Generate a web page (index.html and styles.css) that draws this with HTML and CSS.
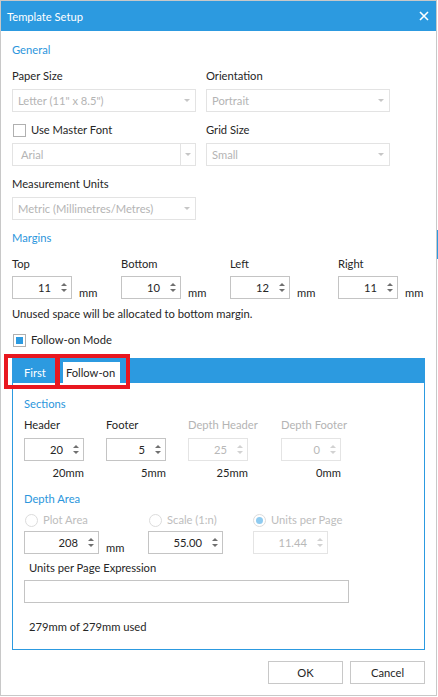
FILE: index.html
```html
<!DOCTYPE html>
<html>
<head>
  <title>Template Setup</title>
  <link rel="stylesheet" href="styles.css">
</head>
<body>
  <div class="window">
    <div class="titlebar">
      <span class="title">Template Setup</span>
      <svg class="close" width="10" height="10" viewBox="0 0 10 10">
        <path d="M1 1L9 9M9 1L1 9" stroke="#fff" stroke-width="1.6" fill="none"/>
      </svg>
    </div>

    <div class="dialog-body">
      <div class="group-title">General</div>
      <div class="general-grid">
        <div class="field">
          <div class="label">Paper Size</div>
          <div class="combo disabled"><span>Letter (11" x 8.5")</span><i class="caret"></i></div>
        </div>
        <div class="field">
          <div class="label">Orientation</div>
          <div class="combo disabled"><span>Portrait</span><i class="caret"></i></div>
        </div>
        <div class="field">
          <div class="check"><span class="box"></span><span>Use Master Font</span></div>
          <div class="combo disabled editable"><span>Arial</span><span class="sep"><i class="caret"></i></span></div>
        </div>
        <div class="field">
          <div class="label">Grid Size</div>
          <div class="combo disabled"><span>Small</span><i class="caret"></i></div>
        </div>
        <div class="field">
          <div class="label">Measurement Units</div>
          <div class="combo disabled"><span>Metric (Millimetres/Metres)</span><i class="caret"></i></div>
        </div>
      </div>

      <div class="group-title spaced">Margins</div>
      <div class="margin-grid">
        <div class="field">
          <div class="label">Top</div>
          <div class="spin-row">
            <div class="spin"><span class="value">11</span><span class="arrows"><i class="up"></i><i class="down"></i></span></div>
            <span class="unit">mm</span>
          </div>
        </div>
        <div class="field">
          <div class="label">Bottom</div>
          <div class="spin-row">
            <div class="spin"><span class="value">10</span><span class="arrows"><i class="up"></i><i class="down"></i></span></div>
            <span class="unit">mm</span>
          </div>
        </div>
        <div class="field">
          <div class="label">Left</div>
          <div class="spin-row">
            <div class="spin"><span class="value">12</span><span class="arrows"><i class="up"></i><i class="down"></i></span></div>
            <span class="unit">mm</span>
          </div>
        </div>
        <div class="field">
          <div class="label">Right</div>
          <div class="spin-row">
            <div class="spin"><span class="value">11</span><span class="arrows"><i class="up"></i><i class="down"></i></span></div>
            <span class="unit">mm</span>
          </div>
        </div>
      </div>

      <div class="note">Unused space will be allocated to bottom margin.</div>
      <div class="check follow"><span class="box checked"></span><span>Follow-on Mode</span></div>

      <div class="tabs">
        <div class="tab-strip">
          <div class="tab">First</div>
          <div class="tab selected">Follow-on</div>
        </div>
        <div class="highlight first"></div>
        <div class="highlight second"></div>

        <div class="tab-body">
          <div class="group-title">Sections</div>
          <div class="section-grid">
            <div class="field">
              <div class="label">Header</div>
              <div class="spin"><span class="value">20</span><span class="arrows"><i class="up"></i><i class="down"></i></span></div>
              <div class="size">20mm</div>
            </div>
            <div class="field">
              <div class="label">Footer</div>
              <div class="spin"><span class="value">5</span><span class="arrows"><i class="up"></i><i class="down"></i></span></div>
              <div class="size">5mm</div>
            </div>
            <div class="field">
              <div class="label muted">Depth Header</div>
              <div class="spin disabled"><span class="value">25</span><span class="arrows"><i class="up"></i><i class="down"></i></span></div>
              <div class="size">25mm</div>
            </div>
            <div class="field">
              <div class="label muted">Depth Footer</div>
              <div class="spin disabled"><span class="value">0</span><span class="arrows"><i class="up"></i><i class="down"></i></span></div>
              <div class="size">0mm</div>
            </div>
          </div>

          <div class="group-title spaced">Depth Area</div>
          <div class="depth-grid">
            <div class="radio"><span class="dot"></span><span>Plot Area</span></div>
            <div class="radio"><span class="dot"></span><span>Scale (1:n)</span></div>
            <div class="radio last"><span class="dot checked"></span><span>Units per Page</span></div>

            <div class="spin-row">
              <div class="spin wide"><span class="value">208</span><span class="arrows"><i class="up"></i><i class="down"></i></span></div>
              <span class="unit">mm</span>
            </div>
            <div class="spin wide"><span class="value">55.00</span><span class="arrows"><i class="up"></i><i class="down"></i></span></div>
            <div class="spin wide disabled"><span class="value">11.44</span><span class="arrows"><i class="up"></i><i class="down"></i></span></div>
          </div>

          <div class="expr-label">Units per Page Expression</div>
          <div class="textbox"></div>
          <div class="used">279mm of 279mm used</div>
        </div>
      </div>

      <div class="buttons">
        <button class="btn">OK</button>
        <button class="btn">Cancel</button>
      </div>
    </div>
  </div>
  <div class="edge-mark"></div>
</body>
</html>
```

FILE: styles.css
```css
* {
  box-sizing: border-box;
}

body {
  margin: 0;
  font-family: Lato, "Liberation Sans", sans-serif;
  font-size: 11.2px;
  color: #262626;
  background-color: #fff;
  position: relative;
}

.window {
  width: 437px;
  height: 696px;
  border: 1px solid #c8c8c8;
}

/* stray bit of the window behind, peeking out on the right */
.edge-mark {
  position: absolute;
  left: 437px;
  top: 230px;
  width: 1px;
  height: 29px;
  background-color: #2c9ae0;
}

.titlebar {
  height: 30px;
  background-color: #2c9ae0;
  color: #fff;
  display: flex;
  align-items: center;
  justify-content: space-between;
  padding: 0 7px 0 6px;
}

.dialog-body {
  padding: 11px 11px 0;
}

.group-title {
  color: #2c96dc;
  line-height: 16px;
}

.group-title.spaced {
  margin-top: 10px;
}

.label,
.note,
.check {
  line-height: 16px;
}

.muted {
  color: #b4b4b4;
}

/* general */
.general-grid {
  display: grid;
  grid-template-columns: 184px 184px;
  column-gap: 10px;
  row-gap: 10px;
  margin-top: 10px;
}

.combo {
  margin-top: 5px;
  height: 23px;
  border: 1px solid #e3e3e3;
  display: flex;
  align-items: center;
  padding-left: 5px;
}

.combo.disabled {
  color: #b4b4b4;
}

.combo.editable {
  padding-left: 8px;
}

.combo .caret {
  margin-left: auto;
  margin-right: 5px;
}

.combo .sep {
  margin-left: auto;
  width: 15px;
  height: 100%;
  border-left: 1px solid #e3e3e3;
  display: flex;
  align-items: center;
  justify-content: center;
}

.combo .sep .caret {
  margin: 0;
}

.caret {
  width: 0;
  height: 0;
  border-left: 3px solid transparent;
  border-right: 3px solid transparent;
  border-top: 3px solid #c6c6c6;
}

.check {
  display: flex;
  align-items: center;
  gap: 5px;
  padding-left: 1px;
}

.check .box {
  width: 13px;
  height: 13px;
  border: 1px solid #b0b0b0;
  display: flex;
  align-items: center;
  justify-content: center;
}

.check .box.checked::after {
  content: "";
  width: 7px;
  height: 7px;
  background-color: #2c9ae0;
}

/* margins */
.margin-grid {
  display: grid;
  grid-template-columns: 109px 109px 108px auto;
  margin-top: 10px;
}

.spin-row {
  display: flex;
  align-items: flex-end;
  margin-top: 4px;
}

.spin {
  width: 60px;
  height: 23px;
  border: 1px solid #c4c4c4;
  display: flex;
  align-items: center;
  justify-content: flex-end;
}

.spin.wide {
  width: 75px;
}

.spin .value {
  padding-right: 5px;
}

.spin .arrows {
  width: 15px;
  display: flex;
  flex-direction: column;
  align-items: center;
  gap: 3px;
}

.arrows i {
  width: 0;
  height: 0;
  border-left: 3px solid transparent;
  border-right: 3px solid transparent;
}

.arrows .up {
  border-bottom: 3px solid #707070;
}

.arrows .down {
  border-top: 3px solid #707070;
}

.spin.disabled {
  border-color: #e4e4e4;
  color: #b8b8b8;
}

.spin.disabled .up {
  border-bottom-color: #d2d2d2;
}

.spin.disabled .down {
  border-top-color: #d2d2d2;
}

.unit {
  margin-left: 7px;
  line-height: 16px;
  margin-bottom: -2px;
}

.note {
  margin-top: 7px;
}

.check.follow {
  margin-top: 10px;
}

/* tabs */
.tabs {
  position: relative;
  margin-top: 10px;
  border: 1px solid #2c9ae0;
}

.tab-strip {
  height: 24px;
  background-color: #2c9ae0;
  display: flex;
  align-items: flex-end;
}

.tab {
  height: 21px;
  line-height: 21px;
  padding: 0 11px;
  color: #fff;
}

.tab.selected {
  margin-left: 6px;
  padding: 0 5px 0 3px;
  background-color: #fff;
  color: #262626;
}

.highlight {
  position: absolute;
  top: -5px;
  height: 35px;
  border: 4px solid #e8171f;
}

.highlight.first {
  left: -9px;
  width: 55px;
}

.highlight.second {
  left: 43px;
  width: 74px;
}

.tab-body {
  padding: 13px 11px 14px;
}

.section-grid {
  display: grid;
  grid-template-columns: 82px 82px 93px auto;
  margin-top: 5px;
}

.section-grid .spin {
  margin-top: 5px;
}

.size {
  width: 60px;
  text-align: right;
  margin-top: 4px;
  line-height: 16px;
}

.depth-grid {
  display: grid;
  grid-template-columns: 124px 105px auto;
  row-gap: 3px;
  margin-top: 5px;
}

.depth-grid .spin-row {
  margin-top: 0;
}

.radio {
  display: flex;
  align-items: center;
  gap: 5px;
  padding-left: 1px;
  line-height: 16px;
  color: #bdbdbd;
}

.radio.last {
  padding-left: 0;
}

.radio .dot {
  width: 13px;
  height: 13px;
  border: 1px solid #dcdcdc;
  border-radius: 50%;
  display: flex;
  align-items: center;
  justify-content: center;
}

.radio .dot.checked::after {
  content: "";
  width: 7px;
  height: 7px;
  border-radius: 50%;
  background-color: #8fcbf0;
}

.expr-label {
  margin-top: 6px;
  padding-left: 5px;
  line-height: 16px;
}

.textbox {
  margin-top: 4px;
  width: 325px;
  height: 23px;
  border: 1px solid #c4c4c4;
}

.used {
  margin-top: 16px;
  padding-left: 5px;
  line-height: 16px;
}

.buttons {
  display: flex;
  justify-content: flex-end;
  gap: 7px;
  margin-top: 11px;
}

.btn {
  width: 75px;
  height: 23px;
  border: 1px solid #c8c8c8;
  background-color: #fff;
  font-family: inherit;
  font-size: 11.2px;
  color: #262626;
  padding: 0;
}
```
